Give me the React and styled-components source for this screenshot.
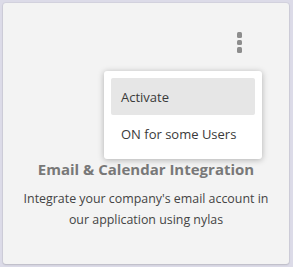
import React from "react";
import styled, { createGlobalStyle } from "styled-components";

const GlobalStyle = createGlobalStyle`
  html, body {
    margin: 0;
    padding: 0;
    background: #dcdbe8;
    font-family: "Open Sans", "Noto Sans", sans-serif;
  }
`;

const menuItems = [
  { label: "Activate", active: true },
  { label: "ON for some Users", active: false },
];

const App = () => {
  return (
    <>
      <GlobalStyle />
      <Page>
        <Card>
          <Header>
            <KebabButton aria-label="More options">
              <Dot />
              <Dot />
              <Dot />
            </KebabButton>
          </Header>
          <Title>Email &amp; Calendar Integration</Title>
          <Description>
            Integrate your company's email account in our application using nylas
          </Description>
          <Menu>
            {menuItems.map((item) => (
              <MenuItem key={item.label} active={item.active}>
                {item.label}
              </MenuItem>
            ))}
          </Menu>
        </Card>
      </Page>
    </>
  );
};

const Page = styled.div`
  width: 293px;
  height: 267px;
  padding: 3px 4px 3px 3px;
  box-sizing: border-box;
`;

const Card = styled.div`
  position: relative;
  height: 261px;
  background: #f3f3f3;
  border-radius: 3px;
  box-shadow: 0 0 0 1px rgba(0, 0, 0, 0.04), 0 1px 2px rgba(0, 0, 0, 0.12);
  display: flex;
  flex-direction: column;
  align-items: center;
  box-sizing: border-box;
  padding: 29px 14px 0;
`;

const Header = styled.div`
  align-self: stretch;
  display: flex;
  justify-content: flex-end;
  padding-right: 33px;
  height: 127px;
`;

const KebabButton = styled.button`
  border: none;
  background: transparent;
  padding: 0;
  height: 22px;
  display: flex;
  flex-direction: column;
  align-items: center;
  gap: 2px;
  cursor: pointer;
`;

const Dot = styled.span`
  width: 5.5px;
  height: 5.5px;
  border-radius: 1.5px;
  background: #8d8d8d;
`;

const Title = styled.h3`
  margin: 0;
  font-size: 15px;
  line-height: 20px;
  font-weight: 700;
  color: #787878;
  text-align: center;
`;

const Description = styled.p`
  margin: 9px 0 0;
  font-size: 12.4px;
  line-height: 21px;
  color: #444444;
  text-align: center;
  max-width: 256px;
`;

const Menu = styled.div`
  position: absolute;
  left: 101px;
  top: 68px;
  width: 158px;
  padding: 7px;
  box-sizing: border-box;
  background: #ffffff;
  border-radius: 3px;
  box-shadow: 0 1px 6px rgba(0, 0, 0, 0.28);
`;

const MenuItem = styled.div`
  height: 37px;
  display: flex;
  align-items: center;
  padding: 0 10px;
  font-size: 13px;
  color: #3a3a3a;
  background: ${(props) => (props.active ? "#e6e6e6" : "transparent")};
  border-radius: 2px;
  cursor: pointer;
`;

export default App;
